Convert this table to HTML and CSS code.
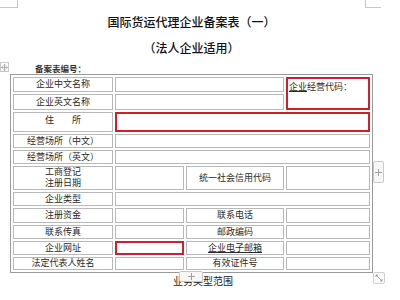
FILE: index.html
```html
<!DOCTYPE html>
<html lang="zh-CN">
<head>
    <meta charset="UTF-8">
    <title>国际货运代理企业备案表（一）</title>
    <link rel="stylesheet" href="styles.css">
</head>
<body>
    <div class="page">
        <span class="corner corner-left"></span>
        <span class="corner corner-right"></span>

        <div class="head">
            <h1>国际货运代理企业备案表（一）</h1>
            <p class="subtitle">（法人企业适用）</p>
        </div>
        <p class="record-no">备案表编号：</p>

        <div class="table-wrap">
            <span class="move-handle">
                <svg width="9" height="9" viewBox="0 0 9 9">
                    <path d="M4.5 0.5v8M0.5 4.5h8M3 2l1.5-1.5L6 2M3 7l1.5 1.5L6 7M2 3L0.5 4.5 2 6M7 3l1.5 1.5L7 6" fill="none" stroke="#8a8a8a" stroke-width="0.8"/>
                </svg>
            </span>

            <table class="record">
                <colgroup>
                    <col class="c-label">
                    <col class="c-value">
                    <col class="c-label2">
                    <col class="c-value2">
                </colgroup>
                <tr class="h15">
                    <td>企业中文名称</td>
                    <td colspan="2"></td>
                    <td rowspan="2" class="code mark"><span class="ul">企业</span>经营代码：</td>
                </tr>
                <tr class="h16">
                    <td>企业英文名称</td>
                    <td colspan="2"></td>
                </tr>
                <tr class="h21">
                    <td class="top">住　　所</td>
                    <td colspan="3" class="mark"></td>
                </tr>
                <tr class="h14">
                    <td>经营场所（中文）</td>
                    <td colspan="3"></td>
                </tr>
                <tr class="h14">
                    <td>经营场所（英文）</td>
                    <td colspan="3"></td>
                </tr>
                <tr class="h24">
                    <td class="two-line"><span>工商登记</span><span>注册日期</span></td>
                    <td></td>
                    <td>统一社会信用代码</td>
                    <td></td>
                </tr>
                <tr class="h14">
                    <td>企业类型</td>
                    <td colspan="3"></td>
                </tr>
                <tr class="h15">
                    <td>注册资金</td>
                    <td></td>
                    <td>联系电话</td>
                    <td></td>
                </tr>
                <tr class="h14">
                    <td>联系传真</td>
                    <td></td>
                    <td>邮政编码</td>
                    <td></td>
                </tr>
                <tr class="h14">
                    <td>企业网址</td>
                    <td class="mark"></td>
                    <td><span class="ul">企业电子邮箱</span></td>
                    <td></td>
                </tr>
                <tr class="h13">
                    <td>法定代表人姓名</td>
                    <td></td>
                    <td>有效证件号</td>
                    <td></td>
                </tr>
            </table>

            <span class="add-col">
                <svg width="7" height="7" viewBox="0 0 7 7">
                    <path d="M3.5 0v7M0 3.5h7" stroke="#a0a0a0" stroke-width="1"/>
                </svg>
            </span>
            <span class="add-row">
                <svg width="7" height="7" viewBox="0 0 7 7">
                    <path d="M3.5 0v7M0 3.5h7" stroke="#a0a0a0" stroke-width="1"/>
                </svg>
            </span>
            <span class="resize">
                <svg width="10" height="10" viewBox="0 0 10 10">
                    <path d="M2 2l6 6M2 2h2M2 2v2M8 8H6M8 8V6" fill="none" stroke="#8a8a8a" stroke-width="0.8"/>
                </svg>
            </span>
        </div>

        <p class="after">业务类型范围</p>
    </div>
</body>
</html>
```

FILE: styles.css
```css
* {
    margin: 0;
    padding: 0;
    box-sizing: border-box;
}

body {
    background: #fff;
    font-family: "Liberation Sans", "Noto Sans CJK SC", sans-serif;
    color: #222;
}

.page {
    position: relative;
    width: 400px;
    height: 300px;
    overflow: hidden;
}

/* page margin crop marks */
.corner {
    position: absolute;
    top: 0;
    height: 8px;
    border-style: solid;
    border-color: #c4c4c4;
}

.corner-left {
    left: 0;
    width: 18px;
    border-width: 0 1px 1px 0;
}

.corner-right {
    left: 365px;
    width: 16px;
    border-width: 0 0 1px 1px;
}

.head {
    margin-left: 10px;
    width: 363px;
    text-align: center;
}

h1 {
    padding-top: 15px;
    font-size: 12px;
    line-height: 16px;
    font-weight: 500;
    color: #111;
}

.subtitle {
    margin-top: 10px;
    font-size: 12px;
    line-height: 16px;
    font-weight: 500;
    color: #111;
}

.record-no {
    margin: 7px 0 0 35px;
    font-size: 8.5px;
    line-height: 10px;
    font-weight: bold;
    color: #333;
}

.table-wrap {
    position: relative;
    margin-left: 10px;
    width: 363px;
}

.record {
    width: 363px;
    table-layout: fixed;
    border: 1px solid #9a9a9a;
    border-spacing: 2px;
}

.c-label { width: 100px; }
.c-value { width: 69px; }
.c-label2 { width: 98px; }
.c-value2 { width: 84px; }

.record td {
    border: 1px solid #b8b8b8;
    font-size: 9px;
    line-height: 11px;
    text-align: center;
    vertical-align: middle;
    color: #2a2a2a;
    white-space: nowrap;
}

.h13 td { height: 13px; }
.h14 td { height: 14px; }
.h15 td { height: 15px; }
.h16 td { height: 16px; }
.h21 td { height: 20px; }
.h24 td { height: 24px; }

.record td.top {
    vertical-align: top;
    padding-top: 2px;
}

.record td.two-line span {
    display: block;
    height: 11px;
    line-height: 11px;
}

.record td.mark {
    border: 2px solid #cf2027;
}

.record td.code {
    text-align: left;
    vertical-align: top;
    padding: 3px 0 0 1px;
}

.ul {
    text-decoration: underline;
}

/* editor handles around the table */
.move-handle {
    position: absolute;
    left: -10px;
    top: -12px;
    width: 9px;
    height: 10px;
    border: 1px solid #c8c8c8;
    background: #fafafa;
    display: flex;
    align-items: center;
    justify-content: center;
}

.add-col,
.add-row {
    position: absolute;
    border: 1px solid #c8c8c8;
    border-radius: 2px;
    background: #f7f7f7;
    display: flex;
    align-items: center;
    justify-content: center;
}

.add-col {
    left: 363px;
    top: 87px;
    width: 11px;
    height: 22px;
}

.add-row {
    left: 169px;
    top: 197px;
    width: 24px;
    height: 11px;
}

.resize {
    position: absolute;
    left: 363px;
    top: 198px;
    width: 12px;
    height: 12px;
    border: 1px solid #d0d0d0;
    border-radius: 2px;
    background: #fafafa;
    display: flex;
    align-items: center;
    justify-content: center;
}

.after {
    margin: 2px 0 0 173px;
    font-size: 10px;
    line-height: 14px;
    color: #222;
}
```
